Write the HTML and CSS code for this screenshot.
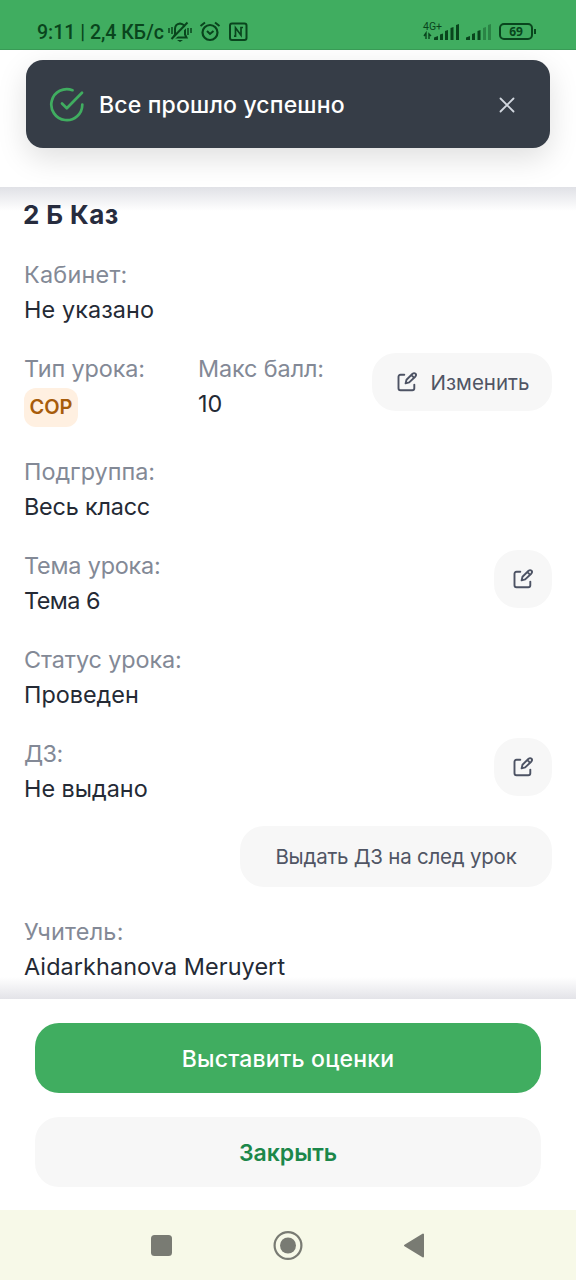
FILE: index.html
```html
<!DOCTYPE html>
<html lang="ru">
<head>
<meta charset="utf-8">
<title>Урок</title>
<link rel="stylesheet" href="styles.css">
</head>
<body>
<svg class="defs" width="0" height="0">
  <symbol id="edit" viewBox="0 0 20 20">
    <path d="M7.3 2.8H3.500Q1.500 2.800 1.500 4.800V16.300Q1.500 18.300 3.500 18.300H15.300Q17.300 18.300 17.300 16.300V12.600" />
    <path d="M8.600 11.400L9.500 7.700L15.300 2Q17.100 .4 18.500 1.700Q19.700 3 18.200 4.700L12.200 10.400Z M15 3.700L16.400 5.200" />
  </symbol>
</svg>
<div class="screen">
  <div class="status">
    <span class="clock">9:11 | 2,4 КБ/с</span>
    <svg class="status-left" width="82" height="24" viewBox="0 0 82 24" fill="none" stroke="#09451d" stroke-width="2">
      <path d="M5.500 17.500H18.500L17 14.500V9Q17 4 12 3.500Q7 4 7 9V14.500Z"/><path d="M4 20.500L21 4" stroke="#40ad60" stroke-width="2"/><path d="M3.500 19L19.500 2.500"/><path d="M9 20H15L12 22Z" fill="#09451d" stroke="none"/><path d="M1 8V13M4 7V14M20 8V15M23 8V13" stroke-width="1.500"/>
      <circle cx="42" cy="12.500" r="7.500" stroke-width="2.200"/><path d="M39 11L42 14L45.500 11M32.500 6L37 2.500M47 2.500L51.500 6"/>
      <rect x="62" y="3.500" width="16.500" height="16.500" rx="2"/><path d="M66 16.200H67.500V7.800L73 15.200V7.500H75" stroke-width="1.700"/>
    </svg>
    <span class="spacer"></span>
    <div class="network"><span>4G+</span>
      <svg width="38" height="18" viewBox="0 0 38 18" fill="#09451d"><path d="M1 14L3 11V17M6 17V12L8 14" fill="none" stroke="#09451d" stroke-width="1.400"/><path d="M11 15.500l4-1.500V18h-4zM17 12.500l3-1V18h-3zM22 9l3-1V18h-3zM27.500 6l3-1V18h-3zM33 3l3-1V18h-3z"/></svg>
    </div>
    <svg class="signal" width="26" height="18" viewBox="0 0 26 18" fill="#09451d"><path d="M0 15.500l4-1.500V18H0zM6 12l3-1V18H6zM11.500 9l3-1V18h-3z"/><path opacity=".4" d="M17 6l3-1V18h-3zM22 3l3-1V18h-3z"/></svg>
    <div class="battery">69</div>
  </div>

  <header class="header">
    <div class="toast">
      <svg width="36" height="36" viewBox="0 0 36 36" fill="none" stroke="#40ad60" stroke-width="2.700" stroke-linecap="round" stroke-linejoin="round"><path d="M23.500 3.200A15.500 15.500 0 1 0 33.300 17.500"/><path d="M13 16.500L17.800 21.300L33 5.800"/></svg>
      <span class="toast-text">Все прошло успешно</span>
      <svg width="16" height="16" viewBox="0 0 16 16" fill="none" stroke="#d2d7df" stroke-width="1.800" stroke-linecap="round"><path d="M1.500 1.500L14.500 14.500M14.500 1.500L1.500 14.500"/></svg>
    </div>
  </header>

  <main class="content">
    <h1 class="title">2 Б Каз</h1>
    <div class="field"><div class="label wide">Кабинет:</div><div class="value loose">Не указано</div></div>
    <div class="row type-row">
      <div class="field type"><div class="label snug">Тип урока:</div><div class="tag">СОР</div></div>
      <div class="field"><div class="label snug">Макс балл:</div><div class="value loose">10</div></div>
      <button class="soft change"><svg class="edit"><use href="#edit"/></svg><span>Изменить</span></button>
    </div>
    <div class="field"><div class="label">Подгруппа:</div><div class="value tight">Весь класс</div></div>
    <div class="row"><div class="field"><div class="label tight">Тема урока:</div><div class="value tighter">Тема 6</div></div>
      <button class="soft square" aria-label="Изменить тему"><svg class="edit"><use href="#edit"/></svg></button></div>
    <div class="field"><div class="label snug">Статус урока:</div><div class="value">Проведен</div></div>
    <div class="row"><div class="field"><div class="label tighter">ДЗ:</div><div class="value">Не выдано</div></div>
      <button class="soft square" aria-label="Изменить ДЗ"><svg class="edit"><use href="#edit"/></svg></button></div>
    <button class="soft homework">Выдать ДЗ на след урок</button>
    <div class="field"><div class="label wide">Учитель:</div><div class="value loose">Aidarkhanova Meruyert</div></div>
  </main>

  <footer class="actions">
    <button class="action primary">Выставить оценки</button>
    <button class="action secondary">Закрыть</button>
  </footer>
  <nav class="nav">
    <svg width="576" height="70" viewBox="0 0 576 70" fill="#797b73"><rect x="151" y="25" width="21" height="21" rx="3.500"/><circle cx="288" cy="35.500" r="8"/><circle cx="288" cy="35.500" r="13.400" fill="none" stroke="#797b73" stroke-width="2.200"/><path d="M405 35.500L423 24.500V46.500Z" stroke="#797b73" stroke-width="2" stroke-linejoin="round"/></svg>
  </nav>
</div>
</body>
</html>
```
FILE: styles.css
```css
* { box-sizing: border-box; }
body { margin: 0; background: #fff; font-family: Inter, "Noto Sans", sans-serif; }
button { border: 0; font: inherit; padding: 0; }
svg { display: block; flex: none; }
.defs { position: absolute; }
.screen { width: 576px; height: 1280px; display: flex; flex-direction: column; overflow: hidden; }
.status { height: 50px; flex: none; background: #40ad60; border-bottom: 1px solid #399b56; display: flex; align-items: flex-start; padding: 20px 43px 0 37px; color: #09451d; }
.clock { font: 500 19.5px/25px Roboto, sans-serif; width: 131px; white-space: nowrap; }
.spacer { flex: 1; }
.network { width: 38px; height: 21px; position: relative; margin-right: 5px; }
.network span { position: absolute; left: 0; top: 1px; font: 10.5px/11px Roboto, sans-serif; }
.network svg { margin-top: 2px; }
.signal { margin: 2px 7px 0 0; }
.battery { width: 34px; height: 17px; border: 2px solid #09451d; border-radius: 5px; margin-top: 3px; font: 700 12px/13px "Noto Sans", sans-serif; text-align: center; position: relative; }
.battery::after { content: ""; position: absolute; right: -5px; top: 4px; width: 2px; height: 5px; background: #09451d; }
.header { height: 137px; flex: none; padding: 10px 26px 0; overflow: hidden; }
.toast { height: 88px; border-radius: 17px; background: #363d47; display: flex; align-items: center; padding: 1px 35px 0 23px; color: #fff; box-shadow: 0 10px 30px rgba(0, 0, 0, .13); }
.toast-text { flex: 1; margin-left: 14px; font-size: 23px; font-weight: 500; letter-spacing: .17px; padding-top: 1px; }
.content { height: 812px; flex: none; padding: 9px 24px 0; display: flex; flex-direction: column; color: #242a35; background: linear-gradient(#e0e1e6, #fff 24px, #fff 790px, #e3e3e8); }
.content > * { flex: none; }
.title { margin: 0 0 23px -1px; font-size: 26px; line-height: 38px; font-weight: 700; letter-spacing: .4px; color: #272c3e; }
.field { margin-bottom: 24px; }
.label, .value { height: 35px; line-height: 35px; font-size: 23.4px; white-space: nowrap; }
.label { color: #838996; }
.value { color: #242a35; }
.wide { letter-spacing: .23px; }
.loose { letter-spacing: .1px; }
.snug { letter-spacing: -.1px; }
.tight { letter-spacing: -.19px; }
.tighter { letter-spacing: -.55px; }
.row { display: flex; justify-content: space-between; }
.type-row { height: 103px; justify-content: flex-start; }
.type { width: 174px; }
.tag { width: 54px; height: 39px; margin-top: 2px; border-radius: 12px; background: #fff0e1; color: #a75c0b; font-size: 20px; font-weight: 600; line-height: 39px; text-align: center; }
.soft { background: #f7f7f7; border-radius: 24px; color: #505564; font-size: 20.5px; display: flex; align-items: center; justify-content: center; }
.edit { width: 20px; height: 20px; fill: none; stroke: #4d5364; stroke-width: 1.900; stroke-linecap: round; stroke-linejoin: round; }
.change { width: 180px; height: 58px; margin: 2px 0 0 auto; gap: 14px; padding-left: 2px; }
.square { width: 58px; height: 58px; margin-top: 2px; }
.homework { width: 312px; height: 61px; margin: -4px 0 27px auto; letter-spacing: -.23px; }
.actions { height: 211px; flex: none; padding: 24px 35px 0; display: flex; flex-direction: column; gap: 24px; background: #fff; }
.action { height: 70px; border-radius: 24px; font-size: 23px; font-weight: 500; padding-top: 2px; }
.primary { background: #40ad60; color: #fff; letter-spacing: .2px; }
.secondary { background: #f7f7f7; color: #1c874a; font-weight: 600; }
.nav { height: 70px; background: #f7f9e8; }
```
